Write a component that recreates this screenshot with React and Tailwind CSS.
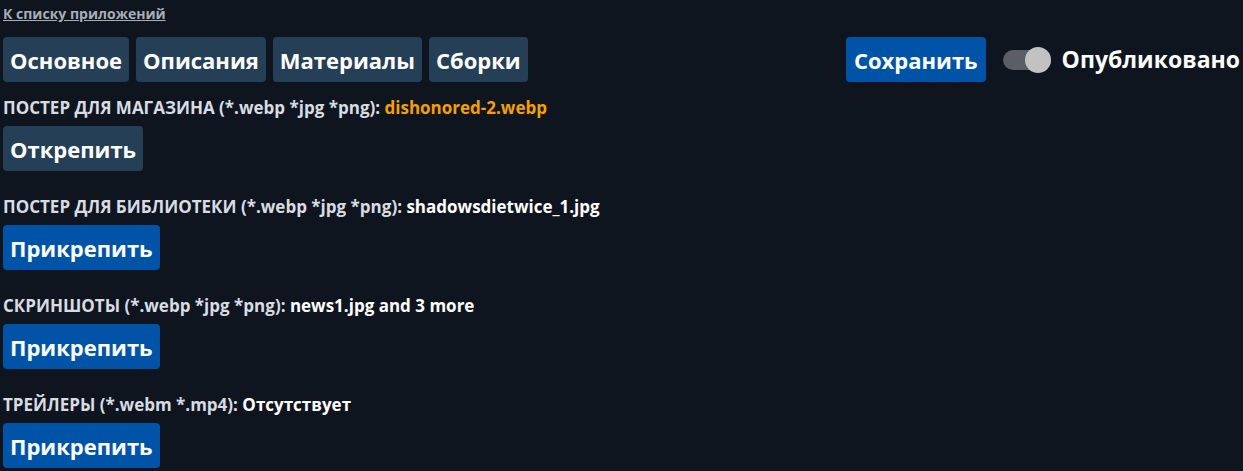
import React from "react";

const font = { fontFamily: '"Open Sans", "Noto Sans", sans-serif' };

function Tab({ children }) {
  return (
    <button className="h-[45px] px-[7px] rounded-[4px] bg-[#243f56] text-white text-[22px] font-bold leading-none">
      {children}
    </button>
  );
}

function Section({ label, value, valueClass, action, dark }) {
  return (
    <div className="flex flex-col">
      <div className="text-[17px] font-bold leading-[20px] text-[#d8dce2] whitespace-nowrap">
        {label} <span className={valueClass}>{value}</span>
      </div>
      <div className="mt-[8px]">
        <button
          className={
            "h-[45px] px-[7px] rounded-[4px] text-white text-[22px] font-bold leading-none " +
            (dark ? "bg-[#243f56]" : "bg-[#0054a8]")
          }
        >
          {action}
        </button>
      </div>
    </div>
  );
}

export default function App() {
  return (
    <div className="min-h-[471px] bg-[#0f151f] px-[3px] pt-[5px]" style={font}>
      <a className="text-[14px] font-bold text-[#a8aeb8] underline leading-[18px] block w-fit">
        К списку приложений
      </a>
      <div className="flex items-center mt-[14px]">
        <div className="flex gap-[7px]">
          <Tab>Основное</Tab>
          <Tab>Описания</Tab>
          <Tab>Материалы</Tab>
          <Tab>Сборки</Tab>
        </div>
        <div className="ml-auto flex items-center">
          <button className="h-[45px] px-[8px] rounded-[4px] bg-[#0054a8] text-white text-[22px] font-bold leading-none">
            Сохранить
          </button>
          <div className="ml-[17px] relative w-[48px] h-[20px] rounded-full bg-[#5a5e66]">
            <div className="absolute right-0 top-[-3px] w-[26px] h-[26px] rounded-full bg-[#c2c2c2]" />
          </div>
          <span className="ml-[11px] text-white text-[23px] font-bold leading-none">Опубликовано</span>
        </div>
      </div>
      <div className="flex flex-col gap-[26px] mt-[16px]">
        <Section
          label="ПОСТЕР ДЛЯ МАГАЗИНА (*.webp *jpg *png):"
          value="dishonored-2.webp"
          valueClass="text-[#f5a000]"
          action="Открепить"
          dark
        />
        <Section
          label="ПОСТЕР ДЛЯ БИБЛИОТЕКИ (*.webp *jpg *png):"
          value="shadowsdietwice_1.jpg"
          valueClass="text-white"
          action="Прикрепить"
        />
        <Section
          label="СКРИНШОТЫ (*.webp *jpg *png):"
          value="news1.jpg and 3 more"
          valueClass="text-white"
          action="Прикрепить"
        />
        <Section
          label="ТРЕЙЛЕРЫ (*.webm *.mp4):"
          value="Отсутствует"
          valueClass="text-white"
          action="Прикрепить"
        />
      </div>
    </div>
  );
}
